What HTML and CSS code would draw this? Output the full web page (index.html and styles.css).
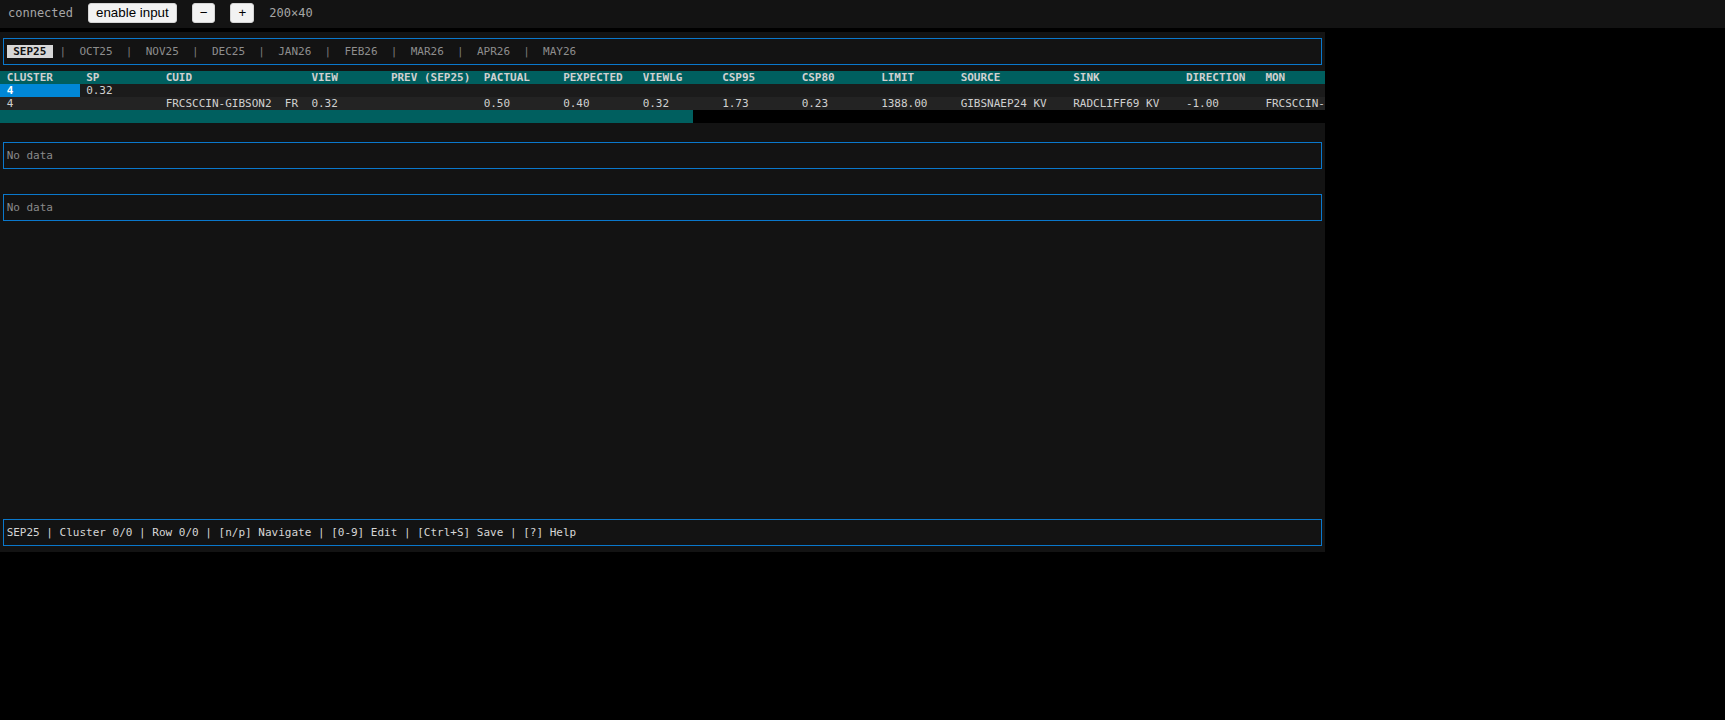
FILE: index.html
```html
<!DOCTYPE html>
<html>
<head>
<meta charset="utf-8">
<link rel="stylesheet" href="styles.css">
</head>
<body>
<div class="topbar">
  <span class="status-text">connected</span>
  <button class="btn">enable input</button>
  <button class="btn">−</button>
  <button class="btn">+</button>
  <span class="status-text">200×40</span>
</div>
<div class="term">
  <div class="box tabs"><span class="tab active"> SEP25 </span><span class="sep"> | </span><span class="tab"> OCT25 </span><span class="sep"> | </span><span class="tab"> NOV25 </span><span class="sep"> | </span><span class="tab"> DEC25 </span><span class="sep"> | </span><span class="tab"> JAN26 </span><span class="sep"> | </span><span class="tab"> FEB26 </span><span class="sep"> | </span><span class="tab"> MAR26 </span><span class="sep"> | </span><span class="tab"> APR26 </span><span class="sep"> | </span><span class="tab"> MAY26 </span></div>
  <div class="table">
    <div class="row head">
      <span class="c first">CLUSTER</span><span class="c second">SP</span><span class="c">CUID</span><span class="c">VIEW</span><span class="c">PREV (SEP25)</span><span class="c">PACTUAL</span><span class="c">PEXPECTED</span><span class="c">VIEWLG</span><span class="c">CSP95</span><span class="c">CSP80</span><span class="c">LIMIT</span><span class="c">SOURCE</span><span class="c">SINK</span><span class="c">DIRECTION</span><span class="c">MON</span>
    </div>
    <div class="row cluster">
      <span class="c first selected">4</span><span class="c second">0.32</span><span class="c"></span><span class="c"></span><span class="c"></span><span class="c"></span><span class="c"></span><span class="c"></span><span class="c"></span><span class="c"></span><span class="c"></span><span class="c"></span><span class="c"></span><span class="c"></span><span class="c"></span>
    </div>
    <div class="row data">
      <span class="c first">4</span><span class="c second"></span><span class="c">FRCSCCIN-GIBSON2  FR</span><span class="c">0.32</span><span class="c"></span><span class="c">0.50</span><span class="c">0.40</span><span class="c">0.32</span><span class="c">1.73</span><span class="c">0.23</span><span class="c">1388.00</span><span class="c">GIBSNAEP24 KV</span><span class="c">RADCLIFF69 KV</span><span class="c">-1.00</span><span class="c">FRCSCCIN-</span>
    </div>
    <div class="row scroll">
      <div class="thumb" style="width: 693px"></div>
    </div>
  </div>
  <div class="blank"></div>
  <div class="box empty">No data</div>
  <div class="blank"></div>
  <div class="box empty">No data</div>
  <div class="fill"></div>
  <div class="box footer">SEP25 | Cluster 0/0 | Row 0/0 | [n/p] Navigate | [0-9] Edit | [Ctrl+S] Save | [?] Help</div>
</div>
</body>
</html>
```
FILE: styles.css
```css
:root {
  --c: 6.625px;
  --h: 13px;
}
* { box-sizing: border-box; }
html, body {
  margin: 0;
  padding: 0;
  background: #000;
}
body {
  width: 1725px;
  height: 720px;
  overflow: hidden;
}
.topbar {
  height: 28px;
  background: #131313;
  display: flex;
  align-items: center;
  gap: 15px;
  padding: 0 8px 2px 8px;
}
.status-text {
  font-family: "DejaVu Sans Mono", monospace;
  font-size: 12px;
  color: #a6a6a6;
}
.btn {
  font-family: "Liberation Sans", Arial, sans-serif;
  font-size: 13.33px;
  height: 20px;
  padding: 0 7px;
  margin: 0;
  background: #f2f2f2;
  color: #000;
  border: 1px solid #d4d4d4;
  border-radius: 3px;
  line-height: 18px;
}
.term {
  margin-top: 4px;
  width: 1325px;
  height: 520px;
  background: #131313;
  font-family: "DejaVu Sans Mono", monospace;
  font-size: 11px;
  line-height: var(--h);
  color: #d0d0d0;
  display: flex;
  flex-direction: column;
}
.box {
  flex: none;
  margin: 6px 3px;
  border: 1px solid #0a78cc;
  padding: 6px 2.625px;
  height: 27px;
  overflow: hidden;
  white-space: pre;
}
.tabs .tab { color: #8e8e8e; }
.tabs .sep { color: #7a7a7a; }
.tabs .tab.active {
  background: #d7d7d7;
  color: #121212;
  font-weight: bold;
}
.table {
  flex: none;
  display: flex;
  flex-direction: column;
}
.row {
  height: var(--h);
  display: grid;
  grid-template-columns:
    calc(var(--c) * 12) calc(var(--c) * 13) calc(var(--c) * 22) calc(var(--c) * 12)
    calc(var(--c) * 14) calc(var(--c) * 12) calc(var(--c) * 12) calc(var(--c) * 12)
    calc(var(--c) * 12) calc(var(--c) * 12) calc(var(--c) * 12) calc(var(--c) * 17)
    calc(var(--c) * 17) calc(var(--c) * 12) calc(var(--c) * 9);
  overflow: hidden;
}
.c {
  overflow: hidden;
  white-space: pre;
}
.c.first, .c.second { padding-left: var(--c); }
.row.head {
  background: #005f5f;
  color: #d0d0d0;
  font-weight: bold;
}
.row.cluster { background: #1b1b1b; }
.row.cluster .selected {
  background: #0087d7;
  color: #fff;
  font-weight: bold;
}
.row.data { background: #232323; }
.row.scroll {
  display: flex;
  background: #000;
}
.thumb {
  height: var(--h);
  background: #005f5f;
}
.blank { height: var(--h); flex: none; }
.fill { flex: 1; }
.empty { color: #8a8a8a; }
.footer { color: #d6d6d6; }
```
